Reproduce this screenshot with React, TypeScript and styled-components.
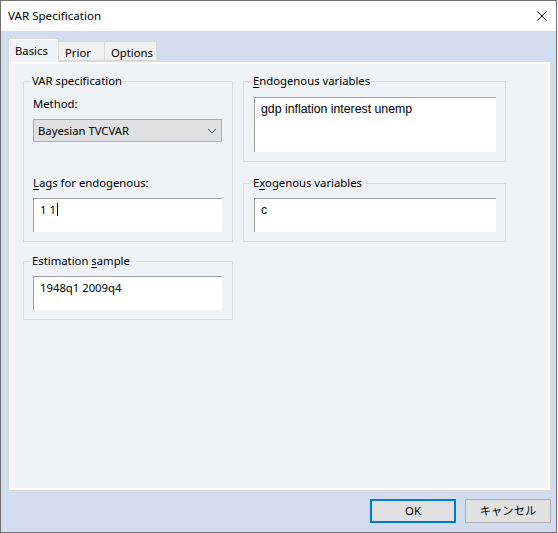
import React from 'react';
import styled, { createGlobalStyle } from 'styled-components';

const uiFont = `"Noto Sans", "Noto Sans CJK JP", sans-serif`;
const editFont = `"Liberation Sans", Arial, sans-serif`;

const GlobalStyle = createGlobalStyle`
  *, *::before, *::after { box-sizing: border-box; }
  html, body { margin: 0; padding: 0; background: #ffffff; }
  body {
    font-family: ${uiFont};
    font-size: 11.3px;
    line-height: 16px;
    color: #000;
  }
`;

const Window = styled.div`
  width: 557px;
  height: 533px;
  border: 1px solid #6f6f6f;
  display: flex;
  flex-direction: column;
  background: #d1ddee;
`;

const TitleBar = styled.div`
  height: 30px;
  background: #ffffff;
  display: flex;
  align-items: center;
  padding-left: 7px;
`;

const Title = styled.div`
  flex: 1;
  font-size: 11.6px;
`;

const CloseButton = styled.div`
  width: 28px;
  height: 30px;
  display: flex;
  align-items: center;
  justify-content: center;
`;

const Body = styled.div`
  flex: 1;
  display: flex;
  flex-direction: column;
  padding: 7px 5px 0 7px;
`;

const TabRow = styled.div`
  display: flex;
  align-items: flex-end;
  height: 23px;
`;

const Tab = styled.div<{ $active?: boolean; $width: number }>`
  position: relative;
  z-index: 1;
  width: ${({ $width }) => $width}px;
  height: ${({ $active }) => ($active ? 24 : 20)}px;
  margin-bottom: ${({ $active }) => ($active ? -1 : 0)}px;
  padding: ${({ $active }) => ($active ? '4px 0 0 6px' : '3px 0 0 6px')};
  border: 1px solid #d9d9d9;
  border-bottom: ${({ $active }) => ($active ? 'none' : '1px solid #d9d9d9')};
  border-left: ${({ $active }) => ($active ? '1px solid #d9d9d9' : 'none')};
  background: ${({ $active }) => ($active ? '#eff3f8' : '#f0f0f0')};
  box-shadow: ${({ $active }) => ($active ? 'inset 1px 1px 0 #ffffff, inset -1px 0 0 #ffffff' : 'none')};
`;

const Panel = styled.div`
  flex: 1;
  display: flex;
  border: 1px solid #d9d9d9;
  background: #ffffff;
  padding: 2px;
`;

const PanelInner = styled.div`
  flex: 1;
  background: #eff3f8;
  padding: 9px 0 0 12px;
  display: flex;
  gap: 10px;
  align-items: flex-start;
`;

const Column = styled.div<{ $width: number; $gap: number }>`
  width: ${({ $width }) => $width}px;
  display: flex;
  flex-direction: column;
  gap: ${({ $gap }) => $gap}px;
`;

const Group = styled.fieldset<{ $padTop?: number; $padRight: number; $padLeft: number }>`
  margin: 0;
  min-width: 0;
  border: 1px solid #dcdcdc;
  padding: ${({ $padTop = 7, $padRight, $padLeft }) => `${$padTop}px ${$padRight}px 9px ${$padLeft}px`};
  display: flex;
  flex-direction: column;
`;

const Legend = styled.legend`
  padding: 0 1px;
  margin-left: -2px;
  line-height: 16px;
`;

const Mnemonic = styled.span`
  text-decoration: underline;
  text-underline-offset: 2px;
`;

const Label = styled.div<{ $top?: number }>`
  margin-top: ${({ $top = 0 }) => $top}px;
  height: 16px;
  margin-bottom: 7px;
`;

const Combo = styled.div`
  height: 23px;
  background: #e1e1e1;
  border: 1px solid #adadad;
  display: flex;
  align-items: center;
  justify-content: space-between;
  padding: 0 4px 0 4px;
`;

const Edit = styled.div<{ $height: number; $mono?: boolean }>`
  height: ${({ $height }) => $height}px;
  background: #ffffff;
  border-top: 1px solid #a0a0a0;
  border-left: 1px solid #a0a0a0;
  padding: 3px 6px 0 6px;
  font-family: ${({ $mono }) => ($mono ? editFont : uiFont)};
  font-size: ${({ $mono }) => ($mono ? '12.3px' : '11.3px')};
  white-space: pre;
  display: flex;
  align-items: flex-start;
`;

const Caret = styled.span`
  display: inline-block;
  width: 1px;
  height: 13px;
  margin-top: 1px;
  margin-left: 1px;
  background: #000;
`;

const Footer = styled.div`
  height: 41px;
  display: flex;
  justify-content: flex-end;
  align-items: flex-start;
  padding-top: 8px;
  gap: 9px;
`;

const Button = styled.div<{ $default?: boolean }>`
  width: 86px;
  height: 24px;
  display: flex;
  align-items: center;
  justify-content: center;
  background: #e1e1e1;
  border: ${({ $default }) => ($default ? '2px solid #0078d7' : '1px solid #adadad')};
`;

const App: React.FC = () => {
  return (
    <>
      <GlobalStyle />
      <Window>
        <TitleBar>
          <Title>VAR Specification</Title>
          <CloseButton>
            <svg width="10" height="10" viewBox="0 0 10 10">
              <path d="M0.5 0.5 L9.5 9.5 M9.5 0.5 L0.5 9.5" stroke="#000" strokeWidth="1" fill="none" />
            </svg>
          </CloseButton>
        </TitleBar>
        <Body>
          <TabRow>
            <Tab $active $width={51}>Basics</Tab>
            <Tab $width={46}>Prior</Tab>
            <Tab $width={52}>Options</Tab>
          </TabRow>
          <Panel>
            <PanelInner>
              <Column $width={210} $gap={11}>
                <Group $padLeft={9} $padRight={10}>
                  <Legend>VAR specification</Legend>
                  <Label>Method:</Label>
                  <Combo>
                    <span>Bayesian TVCVAR</span>
                    <svg width="10" height="6" viewBox="0 0 10 6">
                      <path d="M1 1 L5 5 L9 1" stroke="#444" strokeWidth="1" fill="none" />
                    </svg>
                  </Combo>
                  <Label $top={33}>
                    <Mnemonic>L</Mnemonic>ags for endogenous:
                  </Label>
                  <Edit $height={34}>
                    1 1<Caret />
                  </Edit>
                </Group>
                <Group $padLeft={9} $padRight={10}>
                  <Legend>
                    Estimation <Mnemonic>s</Mnemonic>ample
                  </Legend>
                  <Edit $height={34}>1948q1 2009q4</Edit>
                </Group>
              </Column>
              <Column $width={263} $gap={13}>
                <Group $padLeft={10} $padRight={9} $padTop={8}>
                  <Legend>
                    <Mnemonic>E</Mnemonic>ndogenous variables
                  </Legend>
                  <Edit $height={55} $mono>gdp inflation interest unemp</Edit>
                </Group>
                <Group $padLeft={10} $padRight={9}>
                  <Legend>
                    E<Mnemonic>x</Mnemonic>ogenous variables
                  </Legend>
                  <Edit $height={34} $mono>c</Edit>
                </Group>
              </Column>
            </PanelInner>
          </Panel>
          <Footer>
            <Button $default>OK</Button>
            <Button>キャンセル</Button>
          </Footer>
        </Body>
      </Window>
    </>
  );
};

export default App;
